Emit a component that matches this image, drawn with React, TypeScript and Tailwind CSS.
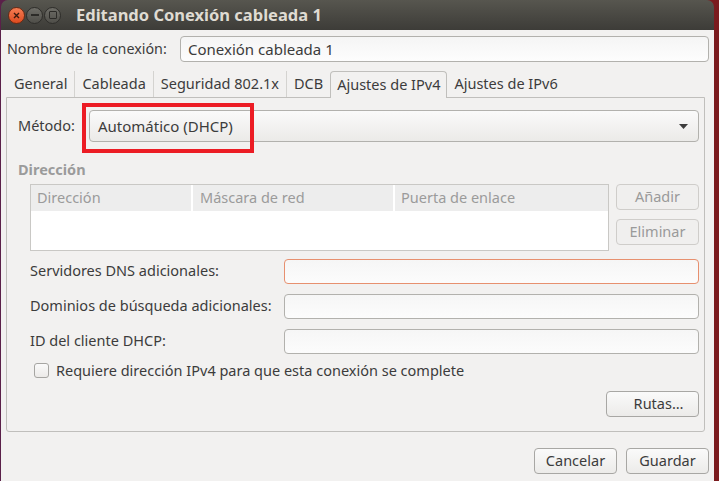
import React from "react";

const font = { fontFamily: '"Noto Sans", "Open Sans", sans-serif' };

const tabs = ["General", "Cableada", "Seguridad 802.1x", "DCB", "Ajustes de IPv4", "Ajustes de IPv6"];

function Field({ label, error }: { label: string; error?: boolean }) {
  return (
    <div className="flex items-center h-[25px]">
      <span className="w-[254px] text-[14.5px] text-[#3c3c3c]">{label}</span>
      <div
        className={
          "flex-1 h-[25px] rounded-[4px] border bg-gradient-to-b from-[#f6f6f6] to-[#fcfcfc] " +
          (error ? "border-[#e7906f]" : "border-[#b2b1ad]")
        }
      />
    </div>
  );
}

function Btn({ label, disabled, className }: { label: string; disabled?: boolean; className?: string }) {
  return (
    <div
      className={
        "h-[26px] rounded-[4px] border flex items-center justify-center text-[14.5px] " +
        (disabled
          ? "border-[#cfcdca] bg-[#f0efee] text-[#9a9a9a] "
          : "border-[#a8a7a4] bg-gradient-to-b from-[#fafafa] to-[#ecebe9] text-[#3c3c3c] ") +
        (className ?? "")
      }
    >
      {label}
    </div>
  );
}

export default function App() {
  return (
    <div className="w-[719px] h-[481px] flex bg-gradient-to-r from-[#5a2049] to-[#7b1b1e] overflow-hidden" style={font}>
      <div className="w-px" />
      <div className="w-[713px] flex flex-col">
        {/* Title bar */}
        <div className="h-[30px] rounded-t-[7px] bg-gradient-to-b from-[#57564f] to-[#3d3c38] flex items-center pl-[7px]">
          <div className="w-[17px] h-[17px] rounded-full bg-gradient-to-b from-[#f57c52] to-[#dd4a1d] border border-[#6a2a14] flex items-center justify-center">
            <svg width="7" height="7" viewBox="0 0 7 7">
              <path d="M1 1L6 6M6 1L1 6" stroke="#3b1a0e" strokeWidth="1.4" />
            </svg>
          </div>
          <div className="w-[17px] h-[17px] ml-[1px] rounded-full bg-gradient-to-b from-[#6e6d67] to-[#4f4e49] border border-[#2e2d2a] flex items-center justify-center">
            <div className="w-[8px] h-[2px] bg-[#2c2b28]" />
          </div>
          <div className="w-[17px] h-[17px] ml-[1px] rounded-full bg-gradient-to-b from-[#6e6d67] to-[#4f4e49] border border-[#2e2d2a] flex items-center justify-center">
            <div className="w-[8px] h-[8px] border border-[#2c2b28] rounded-[1px]" />
          </div>
          <span className="ml-[15px] text-[16.5px] font-bold text-[#dfdbd2]">Editando Conexión cableada 1</span>
        </div>

        {/* Body */}
        <div className="flex-1 bg-[#f2f1f0] flex flex-col px-[5px]">
          <div className="flex items-center mt-[6px] h-[26px]">
            <span className="w-[174px] pl-[1px] text-[14.3px] text-[#3c3c3c]">Nombre de la conexión:</span>
            <div className="flex-1 h-[26px] rounded-[4px] border border-[#b2b1ad] bg-gradient-to-b from-[#f5f5f5] to-[#fdfdfd] flex items-center px-[7px] text-[15px] text-[#3c3c3c]">
              Conexión cableada 1
            </div>
          </div>

          {/* Tabs */}
          <div className="flex items-end mt-[8px] h-[27px] pl-[1px] text-[14.5px] text-[#3c3c3c]">
            {tabs.map((t, i) =>
              t === "Ajustes de IPv4" ? (
                <div
                  key={t}
                  className="h-[27px] px-[6px] border border-b-0 border-[#c0bfbc] rounded-t-[4px] bg-[#f2f1f0] flex items-center relative top-px"
                >
                  {t}
                </div>
              ) : (
                <div
                  key={t}
                  className={
                    "h-[26px] px-[7px] flex items-center " +
                    (i < 3 ? "border-r border-[#d4d3d0]" : "")
                  }
                >
                  {t}
                </div>
              )
            )}
          </div>

          {/* Notebook panel */}
          <div className="w-[699px] h-[335px] border border-[#c0bfbc] rounded-b-[3px] flex flex-col pl-[11px] pr-[5px]">
            <div className="flex items-center mt-[12px] h-[32px]">
              <span className="w-[71px] text-[14.5px] text-[#3c3c3c]">Método:</span>
              <div className="relative flex-1 h-[32px] rounded-[4px] border border-[#b2b1ad] bg-gradient-to-b from-[#fafafa] to-[#ebeae8] flex items-center px-[8px] text-[15px] text-[#3c3c3c]">
                Automático (DHCP)
                <svg className="absolute right-[10px] top-[13px]" width="9" height="5" viewBox="0 0 9 5">
                  <path d="M0 0H9L4.5 5Z" fill="#3c3c3c" />
                </svg>
                <div className="absolute left-[-8px] top-[-8px] w-[172px] h-[50px] border-[4px] border-[#ec1c24]" />
              </div>
            </div>

            <div className="mt-[17px] text-[14.5px] font-bold text-[#9b9b9b]">Dirección</div>

            <div className="flex mt-[3px] pl-[12px]">
              <div className="w-[579px] h-[67px] border border-[#c9c8c5] bg-white flex flex-col">
                <div className="h-[26px] bg-[#ededed] flex text-[14.5px] text-[#9b9b9b]">
                  <div className="w-[162px] pl-[6px] flex items-center border-r-2 border-white">Dirección</div>
                  <div className="w-[202px] pl-[7px] flex items-center border-r-2 border-white">Máscara de red</div>
                  <div className="w-[210px] pl-[6px] flex items-center">Puerta de enlace</div>
                </div>
              </div>
              <div className="ml-[7px] flex flex-col gap-[9px]">
                <Btn label="Añadir" disabled className="w-[83px]" />
                <Btn label="Eliminar" disabled className="w-[83px]" />
              </div>
            </div>

            <div className="flex flex-col gap-[10px] mt-[8px] pl-[12px]">
              <Field label="Servidores DNS adicionales:" error />
              <Field label="Dominios de búsqueda adicionales:" />
              <Field label="ID del cliente DHCP:" />
            </div>

            <div className="flex items-center mt-[6px] pl-[16px] h-[22px]">
              <div className="w-[15px] h-[15px] rounded-[3px] border border-[#a6a5a2] bg-gradient-to-b from-[#fafafa] to-[#eceae8]" />
              <span className="ml-[7px] text-[14.5px] text-[#3c3c3c]">
                Requiere dirección IPv4 para que esta conexión se complete
              </span>
            </div>

            <div className="flex justify-end mt-[9px]">
              <Btn label="Rutas…" className="w-[93px] pl-[12px]" />
            </div>
          </div>

          <div className="flex justify-end gap-[9px] mt-[16px]">
            <Btn label="Cancelar" className="w-[83px]" />
            <Btn label="Guardar" className="w-[83px]" />
          </div>
        </div>
      </div>
      <div className="flex-1" />
    </div>
  );
}
